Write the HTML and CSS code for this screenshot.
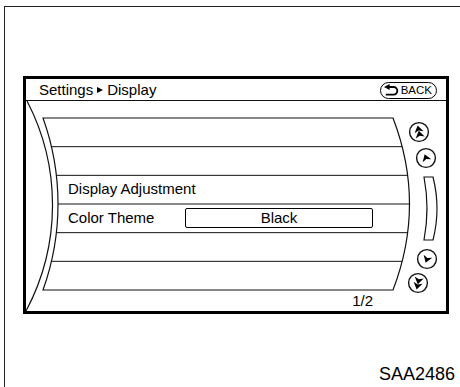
FILE: index.html
```html
<!DOCTYPE html>
<html>
<head>
<meta charset="utf-8">
<link rel="stylesheet" href="styles.css">
</head>
<body>
<div class="frame">
  <div class="screen">
    <div class="header">
      <div class="crumb"><span>Settings</span><span class="tri"></span><span>Display</span></div>
      <div class="back">
        <svg class="back-icon" width="15" height="12" viewBox="0 0 15 12">
          <polygon points="0,3 5.6,0 5.6,6" fill="#000"/>
          <path d="M4.5 3 H9.5 A3.8 3.8 0 0 1 9.5 10.6 H1.8" fill="none" stroke="#000" stroke-width="1.9"/>
        </svg>
        <span>BACK</span>
      </div>
    </div>
    <div class="body">
      <svg class="art" width="420" height="210" viewBox="0 0 420 210">
        <defs>
          <clipPath id="listclip">
            <path d="M17 17 L367 17 Q400 103 367 189 L17 189 A254 254 0 0 0 17 17 Z"/>
          </clipPath>
          <path id="tip" d="M0 -4 L4.6 2.9 L0 1 L-4.6 2.9 Z"/>
        </defs>
        <g fill="none" stroke="#111">
          <path d="M1 0 A225 225 0 0 1 0 210" stroke-width="1.2"/>
          <path d="M17 17 L367 17 Q400 103 367 189 L17 189 A254 254 0 0 0 17 17 Z" stroke-width="1.2"/>
          <g clip-path="url(#listclip)" stroke-width="1">
            <line x1="0" y1="45.67" x2="420" y2="45.67"/>
            <line x1="0" y1="74.33" x2="420" y2="74.33"/>
            <line x1="0" y1="103" x2="420" y2="103"/>
            <line x1="0" y1="131.67" x2="420" y2="131.67"/>
            <line x1="0" y1="160.33" x2="420" y2="160.33"/>
          </g>
          <circle cx="393" cy="31" r="9.4" stroke-width="1.4"/>
          <circle cx="400" cy="57" r="9.4" stroke-width="1.4"/>
          <circle cx="401" cy="158" r="9.4" stroke-width="1.4"/>
          <circle cx="392" cy="182" r="9.4" stroke-width="1.4"/>
          <path d="M398 76 Q404 107.5 398 139 L407 139 Q415 107.5 407 76 Z" stroke-width="1.2"/>
        </g>
        <g fill="#000">
          <g transform="translate(393 31) rotate(-12)">
            <use href="#tip" transform="translate(0 -2.6)"/>
            <use href="#tip" transform="translate(0 2.8)"/>
          </g>
          <g transform="translate(400 57) rotate(-20)"><use href="#tip"/></g>
          <g transform="translate(401 158) rotate(200)"><use href="#tip"/></g>
          <g transform="translate(392 182) rotate(192)">
            <use href="#tip" transform="translate(0 -2.6)"/>
            <use href="#tip" transform="translate(0 2.8)"/>
          </g>
        </g>
      </svg>
      <div class="list">
        <div class="row"></div>
        <div class="row"></div>
        <div class="row">Display Adjustment</div>
        <div class="row"><span class="label">Color Theme</span><span class="value">Black</span></div>
        <div class="row"></div>
        <div class="row"></div>
        <div class="pager">1/2</div>
      </div>
    </div>
  </div>
  <div class="code">SAA2486</div>
</div>
</body>
</html>
```
FILE: styles.css
```css
* { box-sizing: border-box; }
html, body { margin: 0; padding: 0; background: #fff; }
body {
  font-family: "Liberation Sans", Arial, sans-serif;
  color: #000;
  width: 460px;
  height: 387px;
  overflow: hidden;
}
.frame {
  margin: 6px 0 0 4px;
  border-left: 1px solid #222;
  border-top: 1px solid #222;
  padding: 69px 5px 0 18px;
  height: 381px;
}
.screen {
  width: 426px;
  height: 238px;
  border: 3px solid #000;
  display: flex;
  flex-direction: column;
}
.header {
  height: 22px;
  border-bottom: 1px solid #111;
  display: flex;
  align-items: center;
  justify-content: space-between;
  padding: 0 9px 0 13px;
}
.crumb {
  display: flex;
  align-items: center;
  gap: 4px;
  font-size: 15px;
  line-height: 21px;
}
.tri {
  width: 0;
  height: 0;
  border-left: 6px solid #000;
  border-top: 3.5px solid transparent;
  border-bottom: 3.5px solid transparent;
  margin-top: 1px;
}
.back {
  display: flex;
  align-items: center;
  gap: 2px;
  height: 17px;
  border: 1.5px solid #000;
  border-radius: 8.5px;
  padding: 0 4px 0 3px;
  font-size: 11.5px;
  line-height: 13px;
  margin-top: 1px;
}
.back-icon { display: block; }
.body {
  display: grid;
  height: 210px;
}
.art, .list { grid-area: 1 / 1; }
.art { display: block; }
.list {
  padding-top: 17px;
  display: flex;
  flex-direction: column;
  font-size: 15px;
}
.row {
  height: 28.667px;
  line-height: 28.667px;
  padding-left: 42px;
  display: flex;
  align-items: center;
  white-space: nowrap;
}
.label { width: 117px; }
.value {
  width: 188px;
  height: 20px;
  border: 1.5px solid #000;
  border-radius: 2px;
  text-align: center;
  line-height: 17px;
}
.pager {
  height: 21px;
  line-height: 21px;
  text-align: right;
  padding-right: 73px;
}
.code {
  margin-top: 50px;
  text-align: right;
  font-size: 18px;
  line-height: 20px;
}
```
